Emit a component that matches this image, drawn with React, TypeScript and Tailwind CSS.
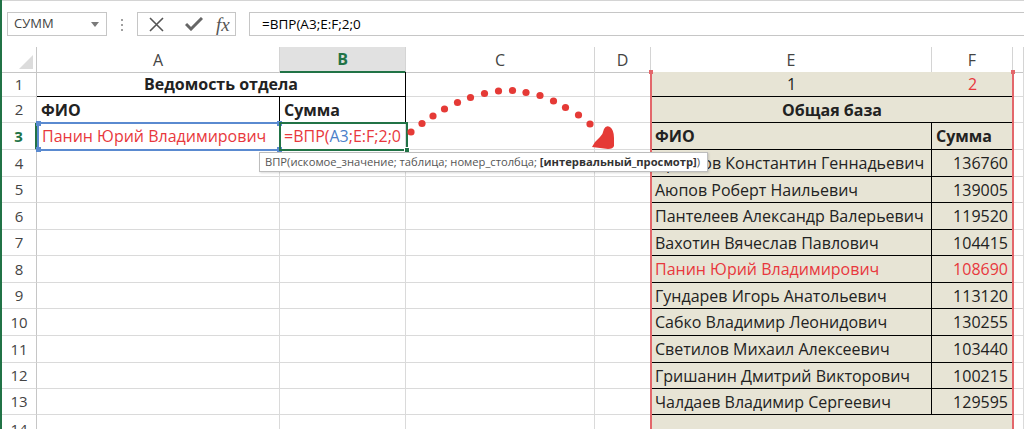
import React from 'react';

const COLS = 'grid grid-cols-[35px_243px_126px_189px_56px_281px_81px_1fr]';
const GRID = 'border-r border-b border-[#dadada]';
const BEIGE = 'bg-[#e7e4d5]';
const UI = "font-['Open_Sans',sans-serif]";

const rowHeights = [
  'h-[25px]', 'h-[26px]', 'h-[27px]', 'h-[27px]', 'h-[26px]', 'h-[27px]', 'h-[26px]',
  'h-[27px]', 'h-[26px]', 'h-[27px]', 'h-[27px]', 'h-[26px]', 'h-[26px]', 'h-[40px]',
];

const people: [string, string][] = [
  ['Дроздов Константин Геннадьевич', '136760'],
  ['Аюпов Роберт Наильевич', '139005'],
  ['Пантелеев Александр Валерьевич', '119520'],
  ['Вахотин Вячеслав Павлович', '104415'],
  ['Панин Юрий Владимирович', '108690'],
  ['Гундарев Игорь Анатольевич', '113120'],
  ['Сабко Владимир Леонидович', '130255'],
  ['Светилов Михаил Алексеевич', '103440'],
  ['Гришанин Дмитрий Викторович', '100215'],
  ['Чалдаев Владимир Сергеевич', '129595'],
];

const dots: [number, number][] = [
  [411, 132], [422, 123.5], [433, 116], [444.5, 109], [457.5, 102.5], [470.5, 97.5],
  [484.5, 93.5], [498.5, 91], [512.5, 90.5], [526, 92.5], [540, 95.5], [553.5, 101],
  [565.5, 107.5], [578.5, 115], [590, 124],
];

function RowHead({ n, active }: { n: number; active?: boolean }) {
  return (
    <div
      className={`flex items-center justify-center border-b border-r border-b-[#dadada] text-[15px] ${
        active ? 'border-r-2 border-r-[#217346] font-bold text-[#217346]' : 'border-r-[#c6c6c6] text-[#444]'
      }`}
    >
      {n}
    </div>
  );
}

function ColHead({ label, active }: { label: string; active?: boolean }) {
  return (
    <div
      className={`flex items-center justify-center border-r border-[#d4d4d4] text-[16px] ${
        active
          ? 'bg-[#e1e1e1] border-b-2 border-b-[#217346] font-bold text-[#217346]'
          : 'border-b border-b-[#c6c6c6] text-[#444]'
      }`}
    >
      {label}
    </div>
  );
}

function Empty() {
  return <div className={GRID} />;
}

function FormulaBar() {
  return (
    <div className="flex h-[47px] items-start border-t border-[#d4d4d4] pl-[5px] pt-[11px]">
      <div className="flex h-[24px] w-[100px] items-center justify-between border border-[#c6c6c6] pl-[6px] pr-[7px] text-[13px] text-[#444]">
        <span>СУММ</span>
        <svg width="8" height="5" viewBox="0 0 8 5">
          <path d="M0 0h8L4 5z" fill="#7a7a7a" />
        </svg>
      </div>
      <div className="flex w-[30px] flex-col items-center justify-center gap-[3px] pt-[7px]">
        <span className="h-[2px] w-[2px] bg-[#a0a0a0]" />
        <span className="h-[2px] w-[2px] bg-[#a0a0a0]" />
        <span className="h-[2px] w-[2px] bg-[#a0a0a0]" />
      </div>
      <div className="flex h-[24px] w-[99px] items-center border border-[#c6c6c6] pl-[11px]">
        <svg width="15" height="15" viewBox="0 0 15 15">
          <path d="M1 1l13 13M14 1L1 14" stroke="#555" strokeWidth="1.6" />
        </svg>
        <svg className="ml-[21px]" width="18" height="14" viewBox="0 0 18 14">
          <path d="M1 7l5 5L17 1" stroke="#666" strokeWidth="3" fill="none" />
        </svg>
        <span className="ml-[13px] font-['Liberation_Serif',serif] text-[19px] italic leading-none text-[#555]">
          fx
        </span>
      </div>
      <div className="ml-[13px] flex h-[24px] flex-1 items-center border border-r-0 border-[#c6c6c6] pl-[12px] text-[13.5px] text-black">
        =ВПР(A3;E:F;2;0
      </div>
    </div>
  );
}

export default function App() {
  return (
    <div className={`relative flex h-[429px] w-[1024px] overflow-hidden bg-white ${UI}`}>
      <div className="w-[2px] shrink-0 bg-[#217346]" />
      <div className="w-[1022px]">
        <FormulaBar />

        {/* column headers */}
        <div className={`${COLS} h-[25px]`}>
          <div className="flex items-end justify-end border-b border-r border-[#c6c6c6] pb-[3px] pr-[3px]">
            <svg width="14" height="14" viewBox="0 0 14 14">
              <path d="M14 0v14H0z" fill="#dcdcdc" />
            </svg>
          </div>
          <ColHead label="A" />
          <ColHead label="B" active />
          <ColHead label="C" />
          <ColHead label="D" />
          <ColHead label="E" />
          <ColHead label="F" />
          <ColHead label="" />
        </div>

        {/* row 1 */}
        <div className={`${COLS} ${rowHeights[0]} text-[16px] text-[#222]`}>
          <RowHead n={1} />
          <div className="col-span-2 flex items-center justify-center border-b border-r border-black font-bold">
            Ведомость отдела
          </div>
          <Empty />
          <Empty />
          <div className={`${BEIGE} flex items-center justify-center border-b border-black`}>1</div>
          <div className={`${BEIGE} flex items-center justify-center border-b border-black text-[#e8383d]`}>2</div>
          <Empty />
        </div>

        {/* row 2 */}
        <div className={`${COLS} ${rowHeights[1]} text-[16px] text-[#222]`}>
          <RowHead n={2} />
          <div className="flex items-center border-b border-r border-black pl-[4px] font-bold">ФИО</div>
          <div className="flex items-center border-b border-r border-black pl-[4px] font-bold">Сумма</div>
          <Empty />
          <Empty />
          <div className={`${BEIGE} col-span-2 flex items-center justify-center border-b border-black font-bold`}>
            Общая база
          </div>
          <Empty />
        </div>

        {/* row 3 */}
        <div className={`${COLS} ${rowHeights[2]} text-[16px] text-[#222]`}>
          <RowHead n={3} active />
          <div className={`${GRID} flex items-center pl-[5px] text-[#e8383d]`}>Панин Юрий Владимирович</div>
          <div className={`${GRID} flex items-center overflow-visible whitespace-nowrap pl-[4px] text-[#e8383d]`}>
            =ВПР(<span className="text-[#4a7fc9]">A3</span>;E:F;2;0
          </div>
          <Empty />
          <Empty />
          <div className={`${BEIGE} flex items-center border-b border-r border-black pl-[4px] font-bold`}>ФИО</div>
          <div className={`${BEIGE} flex items-center border-b border-black pl-[4px] font-bold`}>Сумма</div>
          <Empty />
        </div>

        {/* rows 4-13 */}
        {people.map(([name, sum], i) => {
          const red = name === 'Панин Юрий Владимирович';
          return (
            <div key={name} className={`${COLS} ${rowHeights[i + 3]} text-[16px] ${red ? 'text-[#e8383d]' : 'text-[#222]'}`}>
              <RowHead n={i + 4} />
              <Empty />
              <Empty />
              <Empty />
              <Empty />
              <div className={`${BEIGE} flex items-center whitespace-nowrap border-b border-r border-black pl-[4px]`}>{name}</div>
              <div className={`${BEIGE} flex items-center justify-end border-b border-black pr-[5px]`}>{sum}</div>
              <Empty />
            </div>
          );
        })}

        {/* row 14 */}
        <div className={`${COLS} ${rowHeights[13]}`}>
          <div className="flex items-start justify-center border-r border-[#c6c6c6] pt-[3px] text-[15px] text-[#444]">14</div>
          <Empty />
          <Empty />
          <Empty />
          <Empty />
          <div className={BEIGE} />
          <div className={BEIGE} />
          <Empty />
        </div>
      </div>

      {/* reference box around A3 */}
      <div className="absolute left-[37px] top-[122px] h-[29px] w-[244px] border-2 border-[#5a8ad0]">
        <span className="absolute -left-[3px] -top-[3px] h-[5px] w-[5px] bg-[#5a8ad0]" />
        <span className="absolute -right-[3px] -top-[3px] h-[5px] w-[5px] bg-[#5a8ad0]" />
        <span className="absolute -bottom-[3px] -left-[3px] h-[5px] w-[5px] bg-[#5a8ad0]" />
        <span className="absolute -bottom-[3px] -right-[3px] h-[5px] w-[5px] bg-[#5a8ad0]" />
      </div>

      {/* active cell B3 */}
      <div className="absolute left-[279px] top-[122px] h-[29px] w-[129px] border-2 border-[#217346]">
        <span className="absolute -bottom-[4px] -right-[4px] h-[6px] w-[6px] border border-white bg-[#217346]" />
      </div>

      {/* range E:F */}
      <div className="absolute bottom-0 left-[650px] top-[71px] w-[364px] border-x-2 border-[#e3676b]">
        <span className="absolute -left-[3px] -top-[1px] h-[4px] w-[4px] bg-[#e3676b]" />
        <span className="absolute -right-[3px] -top-[1px] h-[4px] w-[4px] bg-[#e3676b]" />
      </div>

      {/* dotted arrow */}
      <svg className="pointer-events-none absolute left-0 top-0" width="1024" height="429">
        {dots.map(([x, y]) => (
          <circle key={`${x}-${y}`} cx={x} cy={y} r="3.6" fill="#e53a36" />
        ))}
        <path
          d="M592 147 Q595 141 600 137 Q603 134 604 129 Q606 125 610 127 Q614 130 614 138 L614 146 Q613 149 608 149 Z"
          fill="#e53a36"
        />
      </svg>

      {/* function tooltip */}
      <div className="absolute left-[259px] top-[152px] flex h-[20px] items-center whitespace-nowrap border border-[#bdbdbd] bg-white pl-[5px] pr-[7px] text-[11.2px] text-[#555] shadow-[1px_1px_2px_rgba(0,0,0,0.15)]">
        ВПР(искомое_значение; таблица; номер_столбца;&nbsp;
        <span className="font-bold text-[#333]">[интервальный_просмотр]</span>)
      </div>
    </div>
  );
}
